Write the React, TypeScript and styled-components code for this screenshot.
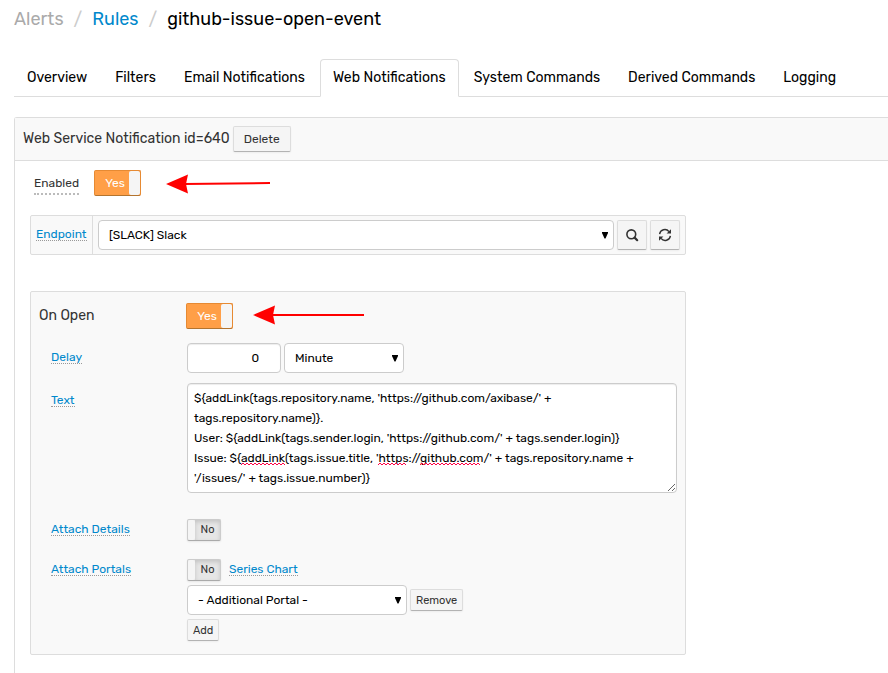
import React, { useState } from "react";
import styled, { createGlobalStyle, css } from "styled-components";

const GlobalStyle = createGlobalStyle`
  *, *::before, *::after { box-sizing: border-box; }
  body {
    margin: 0;
    background: #fff;
    color: #000;
    font-family: Rubik, Roboto, "Liberation Sans", sans-serif;
    font-size: 12px;
    line-height: 20px;
  }
  button, input, select, textarea { font-family: inherit; }
`;

const Page = styled.div`
  padding: 8px 0 0 14px;
  min-height: 100vh;
  display: flex;
  flex-direction: column;
  overflow-x: hidden;
`;

const Breadcrumb = styled.nav`
  display: flex;
  align-items: center;
  gap: 10px;
  height: 22px;
  font-size: 18px;
  white-space: nowrap;
`;

const Crumb = styled.span<{ $muted?: boolean }>`
  color: ${(p) => (p.$muted ? "#aaa" : "#000")};
`;

const Slash = styled.span`
  color: #ccc;
`;

const CrumbLink = styled.a`
  color: #0088cc;
  text-decoration: none;
`;

const Tabs = styled.nav`
  display: flex;
  gap: 2px;
  margin-top: 29px;
  border-bottom: 1px solid #ddd;
  white-space: nowrap;
`;

const Tab = styled.a<{ $active?: boolean }>`
  height: 38px;
  margin-bottom: -1px;
  padding: 0 12px;
  border: 1px solid transparent;
  border-radius: 4px 4px 0 0;
  color: #000;
  font-size: 14px;
  line-height: 36px;
  text-decoration: none;
  ${(p) =>
    p.$active &&
    css`
      border-color: #ddd #ddd #fff;
      background: #fff;
    `}
`;

const Panel = styled.main`
  flex: 1;
  margin-top: 20px;
  border: solid #ddd;
  border-width: 1px 0 0 1px;
  border-top-left-radius: 3px;
`;

const PanelHeader = styled.header`
  display: flex;
  align-items: center;
  gap: 3px;
  height: 43px;
  padding-left: 8px;
  border-bottom: 1px solid #ddd;
  background: #f9f9f9;
`;

const Title = styled.h2`
  margin: 0;
  color: #333;
  font-size: 14px;
  font-weight: 400;
  line-height: 20px;
  white-space: nowrap;
`;

const PanelBody = styled.div`
  max-width: 687px;
  padding: 9px 16px 18px 15px;
`;

const Button = styled.button<{ $small?: boolean }>`
  display: inline-flex;
  align-items: center;
  justify-content: center;
  height: ${(p) => (p.$small ? 22 : 26)}px;
  padding: 0 ${(p) => (p.$small ? 5 : 10)}px;
  border: 1px solid #ddd;
  border-bottom-color: #b3b3b3;
  border-radius: 2px;
  background: #f5f5f5;
  box-shadow: 0 1px 2px rgba(0, 0, 0, 0.05);
  color: #333;
  font-size: ${(p) => (p.$small ? 11 : 12)}px;
  white-space: nowrap;
`;

const IconButton = styled(Button)`
  width: 30px;
  height: 30px;
  padding: 0;
`;

const EnabledRow = styled.div`
  display: flex;
  align-items: center;
  height: 26px;
  padding-left: 4px;
`;

const EnabledLabel = styled.label`
  margin-right: 15px;
  padding-top: 2px;
  border-bottom: 2px dotted #bbb;
  color: #333;
  line-height: 20px;
`;

const ToggleBox = styled.span<{ $on: boolean; $small?: boolean }>`
  position: relative;
  display: inline-flex;
  flex: none;
  flex-direction: ${(p) => (p.$on ? "row" : "row-reverse")};
  width: ${(p) => (p.$small ? 34 : 47)}px;
  height: ${(p) => (p.$small ? 22 : 26)}px;
  overflow: hidden;
  border: 1px solid ${(p) => (p.$on ? "#e68a33" : "#ccc")};
  border-bottom-color: ${(p) => (p.$on ? "#b3742f" : "#aaa")};
  border-radius: 2px;
  background: ${(p) => (p.$on ? "#ff9f47" : "#e6e6e6")};
  box-shadow: ${(p) => (p.$on ? "none" : "0 1px 2px rgba(0, 0, 0, 0.08)")};
`;

const ToggleInput = styled.input`
  position: absolute;
  inset: 0;
  margin: 0;
  appearance: none;
  cursor: pointer;
`;

const ToggleText = styled.span<{ $on: boolean; $small?: boolean }>`
  flex: 1;
  padding-left: ${(p) => (p.$on ? 6 : 0)}px;
  color: ${(p) => (p.$on ? "#fff" : "#333")};
  font-size: ${(p) => (p.$small ? 11 : 12)}px;
  line-height: ${(p) => (p.$small ? 20 : 25)}px;
  text-align: center;
  box-shadow: ${(p) => (p.$on ? "none" : "inset 0 2px 4px rgba(0, 0, 0, 0.15)")};
`;

const ToggleKnob = styled.span<{ $on: boolean; $small?: boolean }>`
  width: ${(p) => (p.$small ? 7 : 11)}px;
  border-radius: 2px;
  background: #f5f5f5;
`;

const ArrowIcon = styled.svg<{ $gap: number; $align: string }>`
  flex: none;
  align-self: ${(p) => p.$align};
  margin-left: ${(p) => p.$gap}px;
`;

const EndpointBar = styled.div`
  display: flex;
  height: 40px;
  margin-top: 19px;
  border: 1px solid #ddd;
  border-radius: 2px;
  background: #f9f9f9;
`;

const EndpointLabel = styled.div`
  display: flex;
  align-items: center;
  width: 62px;
  padding-left: 5px;
  border-right: 1px solid #ddd;
`;

const EndpointControls = styled.div`
  display: flex;
  flex: 1;
  align-items: center;
  gap: 3px;
  padding: 0 5px;
`;

const HintLink = styled.a`
  border-bottom: 1px dotted #999;
  color: #0088cc;
  font-size: 12px;
  line-height: 11px;
  text-decoration: none;
  white-space: nowrap;
`;

const field = css`
  border: 1px solid #ccc;
  border-radius: 4px;
  background: #fff;
  box-shadow: inset 0 1px 1px rgba(0, 0, 0, 0.075);
  color: #000;
  font-size: 12px;
`;

const SelectBox = styled.span<{ $width?: number }>`
  position: relative;
  display: flex;
  ${(p) => (p.$width ? `width: ${p.$width}px;` : "flex: 1;")}
`;

const SelectField = styled.select`
  ${field}
  width: 100%;
  height: 30px;
  padding: 0 20px 0 10px;
  appearance: none;
  box-shadow: none;
`;

const SelectMark = styled.svg`
  position: absolute;
  top: 12px;
  right: 6px;
  pointer-events: none;
`;

const NumberField = styled.input`
  ${field}
  width: 94px;
  height: 30px;
  padding: 0 21px 0 6px;
  text-align: right;
`;

const Group = styled.section`
  display: flex;
  flex-direction: column;
  margin-top: 36px;
  padding: 11px 8px 13px;
  border: 1px solid #ddd;
  border-radius: 2px;
  background: #f9f9f9;
`;

const GroupHead = styled.div`
  display: grid;
  grid-template-columns: 147px 1fr;
  align-items: center;
  height: 26px;
`;

const Row = styled.div<{ $gap: number }>`
  display: grid;
  grid-template-columns: 136px 1fr;
  align-items: start;
  margin-top: ${(p) => p.$gap}px;
  padding-left: 12px;
`;

const RowLabel = styled.div<{ $top: number }>`
  display: flex;
  padding-top: ${(p) => p.$top}px;
`;

const Controls = styled.div<{ $gap?: number }>`
  display: flex;
  align-items: center;
  gap: ${(p) => p.$gap ?? 3}px;
`;

const Stack = styled.div`
  display: flex;
  flex-direction: column;
  align-items: flex-start;
  gap: 4px;
`;

const TextBox = styled.div`
  position: relative;
  display: flex;
`;

const TextArea = styled.textarea`
  ${field}
  width: 100%;
  height: 110px;
  padding: 4px 6px;
  line-height: 20px;
  resize: both;
`;

const Squiggles = styled.svg`
  position: absolute;
  top: 79px;
  left: 0;
  pointer-events: none;
`;

type ToggleProps = { id: string; label: string; initial: boolean; small?: boolean };

function Toggle({ id, label, initial, small }: ToggleProps) {
  const [on, setOn] = useState(initial);
  return (
    <ToggleBox $on={on} $small={small}>
      <ToggleText $on={on} $small={small}>{on ? "Yes" : "No"}</ToggleText>
      <ToggleKnob $on={on} $small={small} />
      <ToggleInput
        id={id}
        type="checkbox"
        aria-label={label}
        checked={on}
        onChange={(e) => setOn(e.target.checked)}
      />
    </ToggleBox>
  );
}

type ArrowProps = { length: number; gap: number; align: "flex-start" | "flex-end"; tilt?: number };

function Arrow({ length, gap, align, tilt = 0 }: ArrowProps) {
  return (
    <ArrowIcon
      $gap={gap}
      $align={align}
      width={length}
      height="24"
      viewBox={`0 0 ${length} 24`}
      aria-hidden="true"
    >
      <path d={`M18 12 L${length} ${12 - tilt}`} stroke="#f00" strokeWidth="2" />
      <path d="M0 12 L22 2.5 L20 12 L22 21.5 Z" fill="#f00" />
    </ArrowIcon>
  );
}

function Select({ label, width, options }: { label: string; width?: number; options: string[] }) {
  return (
    <SelectBox $width={width}>
      <SelectField aria-label={label}>
        {options.map((o) => (
          <option key={o}>{o}</option>
        ))}
      </SelectField>
      <SelectMark width="6" height="7" viewBox="0 0 6 7" aria-hidden="true">
        <path d="M0 0 H6 V1 L3.5 6.5 H2.5 L0 1 Z" fill="#000" />
      </SelectMark>
    </SelectBox>
  );
}

function wave(from: number, to: number) {
  let d = `M${from} 3`;
  for (let x = from; x < to; x += 4) d += ` l2 -2 l2 2`;
  return d;
}

const tabs = [
  "Overview",
  "Filters",
  "Email Notifications",
  "Web Notifications",
  "System Commands",
  "Derived Commands",
  "Logging",
];

const message = `\${addLink(tags.repository.name, 'https://github.com/axibase/' + tags.repository.name)}.
User: \${addLink(tags.sender.login, 'https://github.com/' + tags.sender.login)}
Issue: \${addLink(tags.issue.title, 'https://github.com/' + tags.repository.name + '/issues/' + tags.issue.number)}`;

export default function App() {
  return (
    <>
      <GlobalStyle />
      <Page>
        <Breadcrumb aria-label="Breadcrumb">
          <Crumb $muted>Alerts</Crumb>
          <Slash>/</Slash>
          <CrumbLink href="#rules">Rules</CrumbLink>
          <Slash>/</Slash>
          <Crumb>github-issue-open-event</Crumb>
        </Breadcrumb>
        <Tabs>
          {tabs.map((t) => (
            <Tab key={t} href="#tab" $active={t === "Web Notifications"}>{t}</Tab>
          ))}
        </Tabs>
        <Panel>
          <PanelHeader>
            <Title>Web Service Notification id=640</Title>
            <Button type="button">Delete</Button>
          </PanelHeader>
          <PanelBody>
            <EnabledRow>
              <EnabledLabel htmlFor="enabled">Enabled</EnabledLabel>
              <Toggle id="enabled" label="Enabled" initial />
              <Arrow length={104} gap={25} align="flex-end" tilt={1} />
            </EnabledRow>
            <EndpointBar>
              <EndpointLabel>
                <HintLink href="#endpoint">Endpoint</HintLink>
              </EndpointLabel>
              <EndpointControls>
                <Select label="Endpoint" options={["[SLACK] Slack"]} />
                <IconButton type="button" aria-label="Search">
                  <svg width="14" height="14" viewBox="0 0 14 14" fill="none" stroke="#333" aria-hidden="true">
                    <circle cx="6.3" cy="6.3" r="4.4" strokeWidth="1.6" />
                    <path d="M9.6 9.6 L12.2 12.2" strokeWidth="2.2" strokeLinecap="round" />
                  </svg>
                </IconButton>
                <IconButton type="button" aria-label="Refresh">
                  <svg width="14" height="14" viewBox="0 0 14 14" fill="none" stroke="#333" aria-hidden="true">
                    <path d="M1.6 6.2 A5.3 5.3 0 0 1 11 3.6 M12.4 7.8 A5.3 5.3 0 0 1 3 10.4" strokeWidth="1.4" />
                    <path d="M13 1.2 V5.6 H8.6 Z M1 12.8 V8.4 H5.4 Z" fill="#333" stroke="none" />
                  </svg>
                </IconButton>
              </EndpointControls>
            </EndpointBar>
            <Group>
              <GroupHead>
                <Title>On Open</Title>
                <Controls $gap={0}>
                  <Toggle id="on-open" label="On Open" initial />
                  <Arrow length={111} gap={20} align="flex-start" />
                </Controls>
              </GroupHead>
              <Row $gap={14}>
                <RowLabel $top={9}><HintLink href="#delay">Delay</HintLink></RowLabel>
                <Controls>
                  <NumberField aria-label="Delay" defaultValue="0" />
                  <Select label="Delay unit" width={120} options={["Minute"]} />
                </Controls>
              </Row>
              <Row $gap={10}>
                <RowLabel $top={12}><HintLink href="#text">Text</HintLink></RowLabel>
                <TextBox>
                  <TextArea aria-label="Text" defaultValue={message} />
                  <Squiggles width="300" height="4" viewBox="0 0 300 4" fill="none" stroke="#f04" strokeWidth="1" aria-hidden="true">
                    <path d={wave(54, 98)} />
                    <path d={wave(191, 219)} />
                    <path d={wave(233, 293)} />
                  </Squiggles>
                </TextBox>
              </Row>
              <Row $gap={26}>
                <RowLabel $top={5}><HintLink href="#details">Attach Details</HintLink></RowLabel>
                <Controls><Toggle id="details" label="Attach Details" initial={false} small /></Controls>
              </Row>
              <Row $gap={18}>
                <RowLabel $top={5}><HintLink href="#portals">Attach Portals</HintLink></RowLabel>
                <Stack>
                  <Controls $gap={8}>
                    <Toggle id="portals" label="Attach Portals" initial={false} small />
                    <HintLink href="#chart">Series Chart</HintLink>
                  </Controls>
                  <Controls>
                    <Select label="Additional Portal" width={220} options={["- Additional Portal -"]} />
                    <Button type="button" $small>Remove</Button>
                  </Controls>
                  <Button type="button" $small>Add</Button>
                </Stack>
              </Row>
            </Group>
          </PanelBody>
        </Panel>
      </Page>
    </>
  );
}
